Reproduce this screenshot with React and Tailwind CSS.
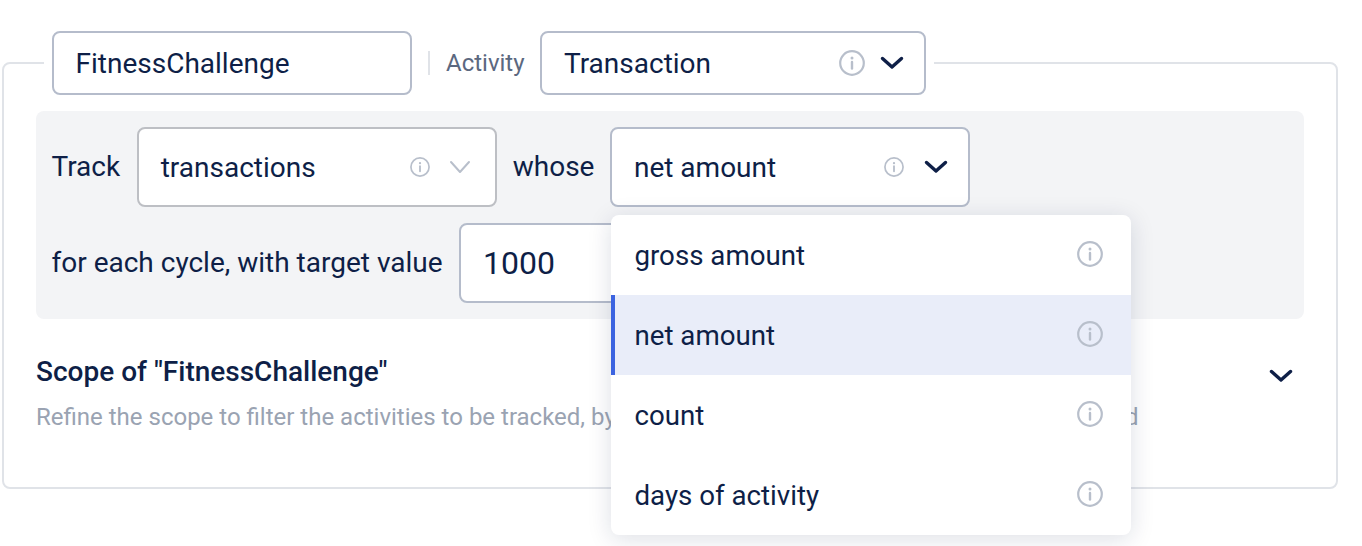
const options = ["gross amount", "net amount", "count", "days of activity"];

function InfoIcon({ size = 26, color = "#b8bfcb" }) {
  return (
    <svg width={size} height={size} viewBox="0 0 26 26" fill="none" className="shrink-0">
      <circle cx="13" cy="13" r="11.8" stroke={color} strokeWidth="2.2" />
      <circle cx="13" cy="8" r="1.5" fill={color} />
      <path d="M13 12v6.5" stroke={color} strokeWidth="2.4" strokeLinecap="round" />
    </svg>
  );
}

function Chevron({ thin = false }) {
  return (
    <svg width="24" height="14" viewBox="0 0 24 14" fill="none" className="shrink-0">
      <path
        d={thin ? "M3 2l9 10 9-10" : "M2.5 2.5L12 11l9.5-8.5"}
        stroke={thin ? "#b8bfcb" : "#0e1f47"}
        strokeWidth={thin ? 2 : 3.4}
        strokeLinecap="round"
        strokeLinejoin="round"
      />
    </svg>
  );
}

function Select({
  label,
  className,
  infoSize,
  thin,
  gap,
  padding = "pl-[22px] pr-[20px]",
  borderClass = "border-[#b5bccb]",
}) {
  return (
    <div className={`flex items-center bg-white border-2 rounded-lg ${padding} ${borderClass} ${className}`}>
      <span className="flex-1 text-left pt-[2px]">{label}</span>
      <InfoIcon size={infoSize} />
      <span className={gap}>
        <Chevron thin={thin} />
      </span>
    </div>
  );
}

export default function App() {
  return (
    <div className="min-h-screen bg-white pl-[2px] pr-[24px] text-[28px] leading-none text-[#0e1f47] font-['Roboto',sans-serif]">
      <div className="h-[31px]" />
      <fieldset className="border-2 border-[#e0e3e8] rounded-lg px-8 h-[458px]">
        <legend className="ml-2 px-2">
          <div className="flex items-center h-[64px]">
            <input
              readOnly
              value="FitnessChallenge"
              className="w-[360px] h-[64px] pl-[21.5px] pr-[22px] border-2 border-[#b5bccb] rounded-lg outline-none text-[#0e1f47]"
            />
            <div className="w-[2px] h-6 bg-[#e0e3e8] ml-4" />
            <span className="ml-4 mr-[16px] w-[78px] text-2xl text-[#5b6880] whitespace-nowrap">Activity</span>
            <Select label="Transaction" infoSize={26} gap="ml-[15px]" className="w-[386px] h-[64px]" />
          </div>
        </legend>

        <div className="mt-4 bg-[#f3f4f6] rounded-lg p-4 flex flex-col gap-4">
          <div className="flex items-center gap-4">
            <span className="-ml-[0.5px] mr-[0.5px]">Track</span>
            <Select
              label="transactions"
              infoSize={20}
              thin
              gap="ml-[18px]"
              padding="pl-[22px] pr-[23px]"
              borderClass="border-[#bdbfc4]"
              className="w-[360px] h-20"
            />
            <span>whose</span>
            <div className="relative">
              <Select
                label="net amount"
                infoSize={20}
                gap="ml-[20px]"
                padding="pl-[21.5px] pr-[20px]"
                className="w-[360px] h-20"
              />
              <div className="absolute z-10 left-[1px] top-[88px] w-[520px] bg-white rounded-lg overflow-hidden shadow-[0_4px_24px_rgba(15,31,69,0.14)]">
                {options.map((opt) => (
                  <div
                    key={opt}
                    className={`flex items-center justify-between h-20 pr-[28px] ${
                      opt === "net amount"
                        ? "bg-[#e9edf9] border-l-4 border-[#3b63e0] pl-[19px]"
                        : "pl-[23px]"
                    }`}
                  >
                    <span className="pt-[2px] text-[27.7px]">{opt}</span>
                    <span className="mb-[2px]">
                      <InfoIcon />
                    </span>
                  </div>
                ))}
              </div>
            </div>
          </div>
          <div className="flex items-center gap-4">
            <span className="-ml-[0.5px] mr-[0.5px]">for each cycle, with target value</span>
            <input
              readOnly
              value="1000"
              className="w-[360px] h-20 px-[22px] bg-white border-2 border-[#b5bccb] rounded-lg outline-none text-[32px]"
            />
          </div>
        </div>

        <div className="mt-[37px] flex items-start justify-between">
          <div>
            <h3 className="font-medium leading-8">Scope of "FitnessChallenge"</h3>
            <p className="mt-[14px] text-2xl leading-[30px] text-[#9aa3b2] whitespace-nowrap">
              Refine the scope to filter the activities to be tracked, by setting the conditions that must meet to be used
            </p>
          </div>
          <span className="mt-[13px] mr-[11px]">
            <Chevron />
          </span>
        </div>
      </fieldset>
    </div>
  );
}
